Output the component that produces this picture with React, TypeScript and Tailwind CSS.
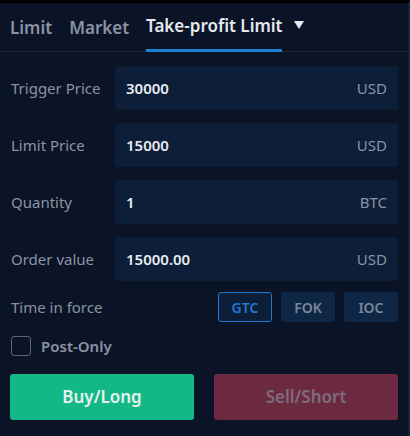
import React from "react";

const rows = [
  { label: "Trigger Price", value: "30000", unit: "USD" },
  { label: "Limit Price", value: "15000", unit: "USD" },
  { label: "Quantity", value: "1", unit: "BTC" },
  { label: "Order value", value: "15000.00", unit: "USD" },
];

export default function App() {
  return (
    <div
      className="w-[410px] h-[436px] bg-[#0b1427] border-t-[3px] border-black border-r-2 border-r-[#15233a] overflow-hidden"
      style={{ fontFamily: '"Noto Sans", "Open Sans", sans-serif' }}
    >
      {/* Tabs */}
      <div className="flex items-end gap-[17px] px-[10px] h-[49px] border-b border-[#17243a]">
        <div className="pb-[11px] text-[17px] font-semibold text-[#8a93a3]">Limit</div>
        <div className="pb-[11px] text-[17px] font-semibold text-[#8a93a3]">Market</div>
        <div className="flex items-center gap-[12px]">
          <div className="pb-[11px] text-[17px] font-semibold text-[#e6e9ee] border-b-[3px] border-[#1b7fd1] -mb-px">
            Take-profit Limit
          </div>
          <svg width="10" height="8" viewBox="0 0 10 8" className="mb-[14px]">
            <path d="M0 0h10L5 8z" fill="#e6e9ee" />
          </svg>
        </div>
      </div>

      {/* Inputs */}
      <div className="flex flex-col gap-[13px] pt-[14px] pl-[11px] pr-[10px]">
        {rows.map((r) => (
          <div key={r.label} className="flex items-center">
            <div className="w-[104px] text-[15px] text-[#8a93a3]">{r.label}</div>
            <div className="flex-1 h-[44px] bg-[#0c1e38] rounded-[3px] flex items-center justify-between pl-[11px] pr-[11px]">
              <span className="text-[15px] font-semibold text-[#e8ebf0]">{r.value}</span>
              <span className="text-[15px] text-[#8a93a3]">{r.unit}</span>
            </div>
          </div>
        ))}
      </div>

      {/* Time in force */}
      <div className="flex items-center justify-between pl-[11px] pr-[10px] mt-[11px]">
        <div className="text-[15px] text-[#8a93a3]">Time in force</div>
        <div className="flex gap-[9px]">
          <button className="w-[54px] h-[30px] rounded-[3px] border border-[#1f7acf] bg-[#0c1e38] text-[14px] font-semibold text-[#1f7acf]">
            GTC
          </button>
          <button className="w-[54px] h-[30px] rounded-[3px] bg-[#0f2747] text-[14px] font-semibold text-[#7b8798]">
            FOK
          </button>
          <button className="w-[54px] h-[30px] rounded-[3px] bg-[#0f2747] text-[14px] font-semibold text-[#7b8798]">
            IOC
          </button>
        </div>
      </div>

      {/* Post-only */}
      <div className="flex items-center gap-[10px] pl-[11px] mt-[13px]">
        <div className="w-[20px] h-[20px] rounded-[3px] border border-[#5b6577]" />
        <span className="text-[15px] font-semibold text-[#8a93a3]">Post-Only</span>
      </div>

      {/* Buttons */}
      <div className="flex justify-between pl-[10px] pr-[10px] mt-[16px]">
        <button className="w-[184px] h-[46px] rounded-[3px] bg-[#14b886] text-[17px] font-semibold text-[#e6f2ee]">
          Buy/Long
        </button>
        <button className="w-[184px] h-[46px] rounded-[3px] bg-[#6b2a3f] text-[17px] font-semibold text-[#7e6c7f]">
          Sell/Short
        </button>
      </div>
    </div>
  );
}
